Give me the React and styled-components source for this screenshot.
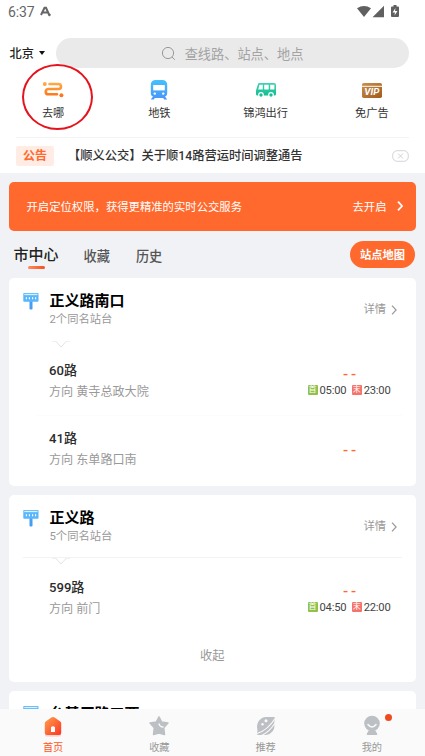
import React, { useState } from "react";
import styled, { createGlobalStyle } from "styled-components";

const GlobalStyle = createGlobalStyle`
  * {
    box-sizing: border-box;
  }
  body {
    margin: 0;
    overflow: hidden;
    font-family: Roboto, "Noto Sans CJK SC", sans-serif;
  }
  button {
    padding: 0;
    border: 0;
    background: none;
    font-family: inherit;
  }
  svg {
    display: block;
    flex: none;
  }
`;

const Screen = styled.div`
  position: relative;
  width: 425px;
  height: 756px;
  overflow: hidden;
  display: flex;
  flex-direction: column;
  background: #f0f2f5;
`;

const Top = styled.header`
  flex: none;
  height: 173px;
  background: #fff;
`;

const StatusBar = styled.div`
  display: flex;
  align-items: center;
  height: 24px;
  padding: 0 25px 0 8px;
  font-size: 14px;
  letter-spacing: -0.15px;
  color: #666;
`;

const StatusIcons = styled.div`
  display: flex;
  align-items: center;
  margin-left: auto;
`;

const SearchRow = styled.div`
  display: flex;
  align-items: center;
  height: 30px;
  margin: 14px 16px 0 9.5px;
`;

const City = styled.button`
  display: flex;
  align-items: center;
  gap: 5px;
  width: 46.5px;
  font-size: 12.2px;
  font-weight: 500;
  color: #222;
`;

const SearchBox = styled.div`
  flex: 1;
  display: flex;
  align-items: center;
  justify-content: center;
  gap: 9px;
  height: 30px;
  padding-right: 1px;
  border-radius: 15px;
  background: #eaeaea;
  font-size: 13.2px;
  color: #a3a3a3;
`;

const Shortcuts = styled.nav`
  display: grid;
  grid-template-columns: repeat(4, 1fr);
  height: 69px;
  padding-top: 11px;
`;

const Shortcut = styled.div`
  display: flex;
  flex-direction: column;
  align-items: center;
  font-size: 11.2px;
  line-height: 16px;
  color: #333;

  svg {
    margin-bottom: 5px;
  }
`;

const Notice = styled.div`
  display: flex;
  align-items: center;
  height: 36px;
  margin: 0 16px;
  border-top: 1px solid #f2f3f4;
`;

const NoticeTag = styled.span`
  width: 38px;
  height: 20px;
  border-radius: 2px;
  background: #ffece4;
  color: #ff692d;
  font-size: 12px;
  font-weight: 700;
  line-height: 20px;
  text-align: center;
`;

const NoticeText = styled.span`
  flex: 1;
  margin-left: 14px;
  font-size: 12.25px;
  font-weight: 500;
  line-height: 20px;
  color: #333;
  white-space: nowrap;
`;

const Banner = styled.div`
  flex: none;
  display: flex;
  align-items: center;
  justify-content: space-between;
  height: 49px;
  margin: 9px 9.5px 0 9px;
  padding: 0 13px 1px 17.5px;
  border-radius: 5px;
  background: #ff692d;
  color: #fff;
  font-size: 11.35px;
`;

const BannerAction = styled.div`
  display: flex;
  align-items: center;
  gap: 10px;
`;

const TabBar = styled.div`
  flex: none;
  display: flex;
  align-items: center;
  height: 47px;
  padding: 0 10px 0 13.5px;
`;

const Tab = styled.button`
  display: flex;
  flex-direction: column;
  align-items: center;
  margin-right: ${(props) => (props.$active ? 25 : 26)}px;
  padding-top: ${(props) => (props.$active ? 2 : 6)}px;
  font-size: ${(props) => (props.$active ? 15 : 13.2)}px;
  font-weight: 500;
  line-height: 20px;
  color: ${(props) => (props.$active ? "#222" : "#555")};

  &::after {
    content: "";
    width: 17px;
    height: 3px;
    margin-top: 1px;
    margin-bottom: -2px;
    border-radius: 2px;
    background: ${(props) =>
      props.$active ? "linear-gradient(90deg, #ff8a60, #f4511e)" : "transparent"};
  }
`;

const MapButton = styled.button`
  width: 65px;
  height: 27px;
  margin-left: auto;
  padding-bottom: 1px;
  border-radius: 14px;
  background: #ff692d;
  color: #fff;
  font-size: 11.3px;
  font-weight: 700;
`;

const Card = styled.section`
  flex: none;
  margin: 0 9.5px 9px 9px;
  padding-bottom: ${(props) => props.$bottom || 0}px;
  border-radius: 5px;
  background: #fff;
`;

const CardHead = styled.div`
  display: flex;
  align-items: flex-start;
  height: 62px;
  padding: 12px 18.5px 0 14px;
`;

const StopInfo = styled.div`
  flex: 1;
  margin-left: 10.5px;
`;

const StopName = styled.h2`
  margin: 0;
  font-size: 15px;
  font-weight: 700;
  line-height: 22px;
  color: #000;
`;

const StopSub = styled.div`
  font-size: 11.3px;
  line-height: 15px;
  color: #999;
`;

const Detail = styled.div`
  display: flex;
  align-items: center;
  gap: 5px;
  margin-top: 12px;
  font-size: 11.3px;
  line-height: 16px;
  color: #999;
`;

const Divider = styled.div`
  height: 7px;
  margin: 0 14px;
  padding-left: 28px;
  border-top: 1px solid ${(props) => (props.$line ? "#f3f3f3" : "transparent")};
`;

const RouteRow = styled.div`
  display: flex;
  align-items: center;
  height: 68px;
  margin: 0 14px 0 28px;
  padding: 0 11px 0 12px;
  border-top: 1px solid ${(props) => (props.$first ? "transparent" : "#fcfcfc")};
`;

const RouteInfo = styled.div`
  flex: 1;
`;

const RouteName = styled.div`
  font-size: 13.1px;
  font-weight: 500;
  line-height: 22px;
  color: #2c2c2c;
`;

const RouteTo = styled.div`
  font-size: 12.1px;
  line-height: 21px;
  color: #999;
`;

const Arrival = styled.div`
  display: flex;
  flex-direction: column;
  align-items: center;
  width: 83px;
`;

const Dashes = styled.div`
  height: 17px;
  margin-right: -4px;
  font-size: 15px;
  font-weight: 500;
  line-height: 18px;
  letter-spacing: 3px;
  color: #ff692d;
`;

const Times = styled.div`
  display: flex;
  align-items: center;
  justify-content: space-between;
  width: 100%;
  height: 16px;
  font-size: 11.2px;
  letter-spacing: -0.2px;
  color: #444;
`;

const TimeItem = styled.span`
  display: flex;
  align-items: center;
  gap: 2px;
`;

const TimeTag = styled.i`
  width: 10px;
  height: 10px;
  border-radius: 1px;
  background: ${(props) => props.$color};
  color: #fff;
  font-size: 8px;
  font-style: normal;
  line-height: 10px;
  letter-spacing: 0;
  text-align: center;
`;

const Collapse = styled.div`
  height: 50px;
  font-size: 12.2px;
  line-height: 49px;
  text-align: center;
  color: #999;
`;

const BottomNav = styled.nav`
  position: absolute;
  left: 0;
  right: 0;
  bottom: 0;
  display: grid;
  grid-template-columns: repeat(4, 1fr);
  height: 47px;
  background: #fafafa;
`;

const NavItem = styled.div`
  position: relative;
  display: flex;
  flex-direction: column;
  align-items: center;
  padding-top: 6px;
  font-size: 10.2px;
  line-height: 15px;
  color: ${(props) => (props.$active ? "#ff5722" : "#999")};

  svg {
    margin-bottom: 3px;
  }
`;

const Badge = styled.span`
  position: absolute;
  top: 5px;
  right: 33px;
  width: 7px;
  height: 7px;
  border-radius: 50%;
  background: #ee4a20;
`;

const Highlight = styled.div`
  position: absolute;
  left: 22px;
  top: 64px;
  width: 71px;
  height: 66px;
  border: 2px solid #e5131d;
  border-radius: 50%;
`;

const Chevron = ({ color, width = 1.2, size = 10 }) => (
  <svg width={size * 0.6} height={size} viewBox="0 0 6 10" fill="none">
    <path d="M1 .7 5.1 5 1 9.3" stroke={color} strokeWidth={width} />
  </svg>
);

const RouteIcon = () => (
  <svg width="22" height="22" viewBox="0 0 22 22">
    <defs>
      <linearGradient id="way" x1="0" y1="3" x2="0" y2="19" gradientUnits="userSpaceOnUse">
        <stop offset="0" stopColor="#ffb04a" />
        <stop offset="1" stopColor="#ff6a10" />
      </linearGradient>
    </defs>
    <g fill="url(#way)">
      <circle cx="2.8" cy="5" r="2" />
      <circle cx="19.4" cy="16.200" r="2" />
    </g>
    <path
      d="M7.500 5h9a2.300 2.300 0 0 1 0 5H6.400a2.600 2.600 0 0 0 0 5.300H15"
      fill="none"
      stroke="url(#way)"
      strokeWidth="2.600"
      strokeLinecap="round"
    />
  </svg>
);

const MetroIcon = () => (
  <svg width="22" height="22" viewBox="0 0 22 22">
    <defs>
      <linearGradient id="metro" x1="0" y1="0" x2="0" y2="1">
        <stop offset="0" stopColor="#45c1fb" />
        <stop offset="1" stopColor="#4a93fb" />
      </linearGradient>
    </defs>
    <path
      d="M7 1h8q4 .7 4.200 4.500v9q0 2.300-2.200 3l2.200 3h-3l-1-1.500H6.800l-1 1.500h-3l2.200-3q-2.200-.7-2.200-3v-9Q3 1.700 7 1Z"
      fill="url(#metro)"
    />
    <path d="M5.200 6h11.600v5.400H5.200Z" fill="#fff" />
    <circle cx="6.800" cy="14.600" r="1.200" fill="#fff" />
    <circle cx="15.200" cy="14.600" r="1.200" fill="#fff" />
  </svg>
);

const BusIcon = () => (
  <svg width="22" height="22" viewBox="0 0 22 22">
    <defs>
      <linearGradient id="bus" x1="0" y1="0" x2="0" y2="1">
        <stop offset="0" stopColor="#42d3b0" />
        <stop offset="1" stopColor="#13bd94" />
      </linearGradient>
    </defs>
    <path
      d="M4.200 4H19q2 0 2 2v9q0 1.500-1.500 1.500H2.500Q1 16.500 1 15v-3.500L3 5q.3-1 1.200-1Z"
      fill="url(#bus)"
    />
    <path d="M4.500 5.800h3.300v4.700H3.200ZM9.200 5.800h4.500v4.700H9.200ZM15.200 5.800h4.200v4.700h-4.200Z" fill="#fff" />
    <g fill="#18bf97" stroke="#fff" strokeWidth="1.200">
      <circle cx="6" cy="16" r="2.300" />
      <circle cx="16" cy="16" r="2.300" />
    </g>
  </svg>
);

const VipIcon = () => (
  <svg width="22" height="22" viewBox="0 0 22 22">
    <defs>
      <linearGradient id="vip" x1="0" y1="0" x2="1" y2="1">
        <stop offset="0" stopColor="#cb8f4d" />
        <stop offset="1" stopColor="#a05b1c" />
      </linearGradient>
    </defs>
    <rect x="1" y="4" width="20" height="15" rx="1.800" fill="url(#vip)" />
    <path d="M1 7.300h20" stroke="#fff" strokeWidth="1" />
    <text
      x="10.800"
      y="16.200"
      fill="#fff"
      fontSize="8.600"
      fontWeight="700"
      fontStyle="italic"
      textAnchor="middle"
      textLength="15"
      lengthAdjust="spacingAndGlyphs"
    >
      VIP
    </text>
  </svg>
);

const StopIcon = () => (
  <svg width="16" height="22" viewBox="0 0 16 22">
    <path d="M6.500 11h3v8q-1.500 1-3 0Z" fill="#459df4" />
    <rect x=".3" y="3" width="15.200" height="8.700" rx=".8" fill="#58b7fa" />
    <path d="M1.300 4.500h13.200" stroke="#d9f0ff" strokeWidth="1.300" />
    <path d="M3.400 7.300v2M6.400 7.300v2M9.600 7.300v2M12.600 7.300v2" stroke="#fff" strokeWidth="1.200" />
  </svg>
);

const HomeIcon = () => (
  <svg width="22" height="22" viewBox="0 0 22 22">
    <defs>
      <linearGradient id="home" x1="0" y1="0" x2="1" y2="1">
        <stop offset="0" stopColor="#ffa14d" />
        <stop offset="1" stopColor="#fb3525" />
      </linearGradient>
    </defs>
    <path d="M3 19.500h16v1.700q-8 1.200-16 0Z" fill="#ff5630" opacity=".22" />
    <path
      d="M9.400 2.500q1.600-1.200 3.200 0l5.700 4q.9.700.9 1.700v9.800q0 2-2 2H4.800q-2 0-2-2V8.200q0-1 .9-1.700Z"
      fill="url(#home)"
    />
    <path d="M9 17v-4.800q2-2 4 0V17Z" fill="#fff" />
  </svg>
);

const StarIcon = () => (
  <svg width="22" height="22" viewBox="0 0 22 22" fill="#bcc0c4">
    <path
      d="m11 1.800 2.700 5.200 6.300 1.100-4.300 4.600.8 6.900L11 18l-5.500 1.600.8-6.900L2 8.100 8.300 7Z"
      stroke="#bcc0c4"
      strokeWidth="1.500"
      strokeLinejoin="round"
    />
    <path d="M11 8.500q.5 3.500 4.500 3.500" fill="none" stroke="#fafafa" strokeWidth="1.500" />
  </svg>
);

const PlanetIcon = () => (
  <svg width="22" height="22" viewBox="0 0 22 22">
    <path
      d="M11 2h7.800q1.700 0 1 2.500-.7 2-.5 5A9 9 0 0 1 11 20H3.500Q1.500 20 2 18q.7-2 .2-4.500A9.500 9.500 0 0 1 11 2Z"
      fill="#bcc0c4"
    />
    <path d="M6.500 20.500Q14.500 17 20 8M2 18.500Q13 15 20 3.500" fill="none" stroke="#fafafa" strokeWidth="1.100" />
    <circle cx="7.500" cy="9.300" r="1.200" fill="#fafafa" />
    <circle cx="11" cy="5.800" r="1.500" fill="#fafafa" />
  </svg>
);

const UserIcon = () => (
  <svg width="22" height="22" viewBox="0 0 22 22">
    <circle cx="11" cy="8.600" r="7.800" fill="#bcc0c4" />
    <path d="M7.500 15.800h7l1.600 2.700q.9 1.500-1 1.500H6.900q-1.900 0-1-1.500Z" fill="#bcc0c4" />
    <path d="M7 9.500q4 5 8 0" fill="none" stroke="#fafafa" strokeWidth="1.600" strokeLinecap="round" />
  </svg>
);

const shortcuts = [
  { label: "去哪", Icon: RouteIcon },
  { label: "地铁", Icon: MetroIcon },
  { label: "锦鸿出行", Icon: BusIcon },
  { label: "免广告", Icon: VipIcon },
];

const stops = [
  {
    name: "正义路南口",
    count: "2个同名站台",
    routes: [
      { name: "60路", to: "黄寺总政大院", first: "05:00", last: "23:00" },
      { name: "41路", to: "东单路口南" },
    ],
  },
  {
    name: "正义路",
    count: "5个同名站台",
    line: true,
    collapse: true,
    routes: [{ name: "599路", to: "前门", first: "04:50", last: "22:00" }],
  },
  { name: "台基厂路口西", routes: [] },
];

const navItems = [
  { label: "首页", Icon: HomeIcon },
  { label: "收藏", Icon: StarIcon },
  { label: "推荐", Icon: PlanetIcon },
  { label: "我的", Icon: UserIcon, badge: true },
];

const Route = ({ route, first }) => (
  <RouteRow $first={first}>
    <RouteInfo>
      <RouteName>{route.name}</RouteName>
      <RouteTo>方向 {route.to}</RouteTo>
    </RouteInfo>
    <Arrival>
      <Dashes>--</Dashes>
      {route.first && (
        <Times>
          <TimeItem>
            <TimeTag $color="#8fc14b">首</TimeTag>
            {route.first}
          </TimeItem>
          <TimeItem>
            <TimeTag $color="#f5736c">末</TimeTag>
            {route.last}
          </TimeItem>
        </Times>
      )}
    </Arrival>
  </RouteRow>
);

const StopCard = ({ stop }) => (
  <Card $bottom={stop.collapse ? 0 : 3}>
    <CardHead>
      <StopIcon />
      <StopInfo>
        <StopName>{stop.name}</StopName>
        <StopSub>{stop.count}</StopSub>
      </StopInfo>
      <Detail>
        详情
        <Chevron color="#999" />
      </Detail>
    </CardHead>
    <Divider $line={stop.line}>
      <svg width="20" height="7" viewBox="0 0 20 7">
        <path d="M1 0h3.500L10 6l5.500-6H19" fill="#fff" stroke="#dcdcdc" strokeWidth=".8" />
      </svg>
    </Divider>
    {stop.routes.map((route, i) => (
      <Route key={route.name} route={route} first={i === 0} />
    ))}
    {stop.collapse && <Collapse>收起</Collapse>}
  </Card>
);

const App = () => {
  const [tab, setTab] = useState("市中心");

  return (
    <Screen>
      <GlobalStyle />
      <Top>
        <StatusBar>
          6:37
          <svg width="12" height="12" viewBox="0 0 12 12" style={{ marginLeft: 6 }}>
            <path d="M1 9 4.500 1.800h1.500L9 8.500M3 6.500h5M8.500 9.700l2-1.500" fill="none" stroke="#666" strokeWidth="2" />
          </svg>
          <StatusIcons>
            <svg width="44" height="14" viewBox="0 0 44 14" fill="#606060">
              <path d="M1 3.300Q8 -1.300 15 3.300L8 12ZM28 .7v11.500H16.500Z" />
              <path d="M36 1.500h1.500V0h3v1.500H42q1 0 1 1V11q0 1-1 1h-6q-1 0-1-1V2.500q0-1 1-1Z" />
              <path d="m39.500 3-3 4.500H39l-.5 3 3-4.500H39Z" fill="#fff" />
            </svg>
          </StatusIcons>
        </StatusBar>
        <SearchRow>
          <City>
            北京
            <svg width="6" height="4" viewBox="0 0 6 4">
              <path d="M0 0h6L3 4Z" fill="#111" />
            </svg>
          </City>
          <SearchBox>
            <svg width="15" height="15" viewBox="0 0 15 15" fill="none" stroke="#999">
              <circle cx="7" cy="7" r="5.600" />
              <path d="m11 11 2.800 2.800" />
            </svg>
            查线路、站点、地点
          </SearchBox>
        </SearchRow>
        <Shortcuts>
          {shortcuts.map(({ label, Icon }) => (
            <Shortcut key={label}>
              <Icon />
              {label}
            </Shortcut>
          ))}
        </Shortcuts>
        <Notice>
          <NoticeTag>公告</NoticeTag>
          <NoticeText>【顺义公交】关于顺14路营运时间调整通告</NoticeText>
          <svg width="17" height="12" viewBox="0 0 17 12" fill="none" stroke="#c8c8c8" strokeWidth=".8">
            <rect x=".7" y=".7" width="15.600" height="10.600" rx="4.500" />
            <path d="m6 3.500 5 5m0-5-5 5" />
          </svg>
        </Notice>
      </Top>
      <Banner>
        开启定位权限，获得更精准的实时公交服务
        <BannerAction>
          去开启
          <Chevron color="#fff" width={1.8} />
        </BannerAction>
      </Banner>
      <TabBar>
        {["市中心", "收藏", "历史"].map((name) => (
          <Tab key={name} $active={name === tab} onClick={() => setTab(name)}>
            {name}
          </Tab>
        ))}
        <MapButton>站点地图</MapButton>
      </TabBar>
      {stops.map((stop) => (
        <StopCard key={stop.name} stop={stop} />
      ))}
      <BottomNav>
        {navItems.map(({ label, Icon, badge }, i) => (
          <NavItem key={label} $active={i === 0}>
            <Icon />
            {label}
            {badge && <Badge />}
          </NavItem>
        ))}
      </BottomNav>
      <Highlight />
    </Screen>
  );
};

export default App;
